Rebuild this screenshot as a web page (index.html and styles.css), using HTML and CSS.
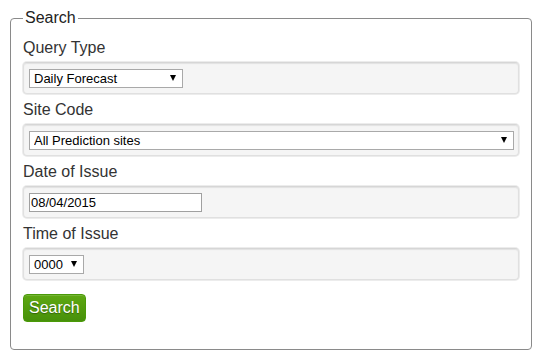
FILE: index.html
```html
<!DOCTYPE html>
<html>
<head>
<meta charset="utf-8">
<link rel="stylesheet" href="styles.css">
</head>
<body>
<form class="search-form">
  <fieldset class="search-box">
    <legend class="search-legend">Search</legend>

    <label class="field-label">Query Type</label>
    <div class="well">
      <span class="select-wrap w-query">
        <select class="ctl-select">
          <option>Daily Forecast</option>
        </select>
      </span>
    </div>

    <label class="field-label">Site Code</label>
    <div class="well">
      <span class="select-wrap w-site">
        <select class="ctl-select">
          <option>All Prediction sites</option>
        </select>
      </span>
    </div>

    <label class="field-label">Date of Issue</label>
    <div class="well">
      <input class="ctl-input" type="text" value="08/04/2015">
    </div>

    <label class="field-label">Time of Issue</label>
    <div class="well">
      <span class="select-wrap w-time">
        <select class="ctl-select">
          <option>0000</option>
        </select>
      </span>
    </div>

    <button class="btn-search" type="button">Search</button>
  </fieldset>
</form>
</body>
</html>
```

FILE: styles.css
```css
body {
  margin: 8px;
  font-family: "Liberation Sans", Arial, sans-serif;
  background: #fff;
}

.search-form {
  margin: 0;
}

.search-box {
  margin: 0 2px;
  padding: 10px 12px 27px 12px;
  border: 1px solid #8a8a8a;
  border-radius: 4px;
  min-width: 0;
}

.search-legend {
  padding: 0 2px;
  font-size: 16px;
  line-height: 20px;
  color: #222;
}

.field-label {
  display: block;
  font-size: 16px;
  line-height: 20px;
  color: #333;
  margin-bottom: 4px;
}

.well {
  display: flex;
  align-items: flex-start;
  background: #f5f5f5;
  border: 1px solid #e0e0e0;
  border-top-color: #d6d6d6;
  border-radius: 4px;
  box-shadow: inset 0 1px 1px rgba(0, 0, 0, 0.08), 0 0 0 1px #ececec;
  padding: 6px 4px 5px 5px;
  margin-bottom: 6px;
}

.select-wrap {
  position: relative;
  display: block;
}

.select-wrap::after {
  content: "";
  position: absolute;
  right: 7px;
  top: 6px;
  border-left: 3px solid transparent;
  border-right: 3px solid transparent;
  border-top: 6px solid #000;
  pointer-events: none;
}

.w-query { width: 154px; }
.w-site { width: 100%; }
.w-time { width: 55px; }

.ctl-select {
  -webkit-appearance: none;
  appearance: none;
  display: block;
  width: 100%;
  height: 19px;
  box-sizing: border-box;
  margin: 0;
  padding: 0 16px 0 4px;
  border: 1px solid #a9a9a9;
  border-radius: 0;
  background: #fff;
  font-family: "Liberation Sans", Arial, sans-serif;
  font-size: 13px;
  line-height: 17px;
  color: #000;
}

.ctl-input {
  display: block;
  width: 173px;
  height: 19px;
  box-sizing: border-box;
  margin: 0;
  padding: 0 1px;
  border: 1px solid #a0a0a0;
  border-radius: 0;
  background: #fff;
  font-family: "Liberation Sans", Arial, sans-serif;
  font-size: 13px;
  color: #000;
}

.btn-search {
  display: block;
  margin-top: 14px;
  padding: 3px 5px;
  border: 1px solid #4a9a08;
  border-radius: 4px;
  background: linear-gradient(#5ea812, #47900a);
  color: #fff;
  font-family: "Liberation Sans", Arial, sans-serif;
  font-size: 16px;
  line-height: 20px;
  text-shadow: 0 1px 1px rgba(0, 0, 0, 0.35);
  box-shadow: inset 0 1px 0 rgba(255, 255, 255, 0.15);
}
```
